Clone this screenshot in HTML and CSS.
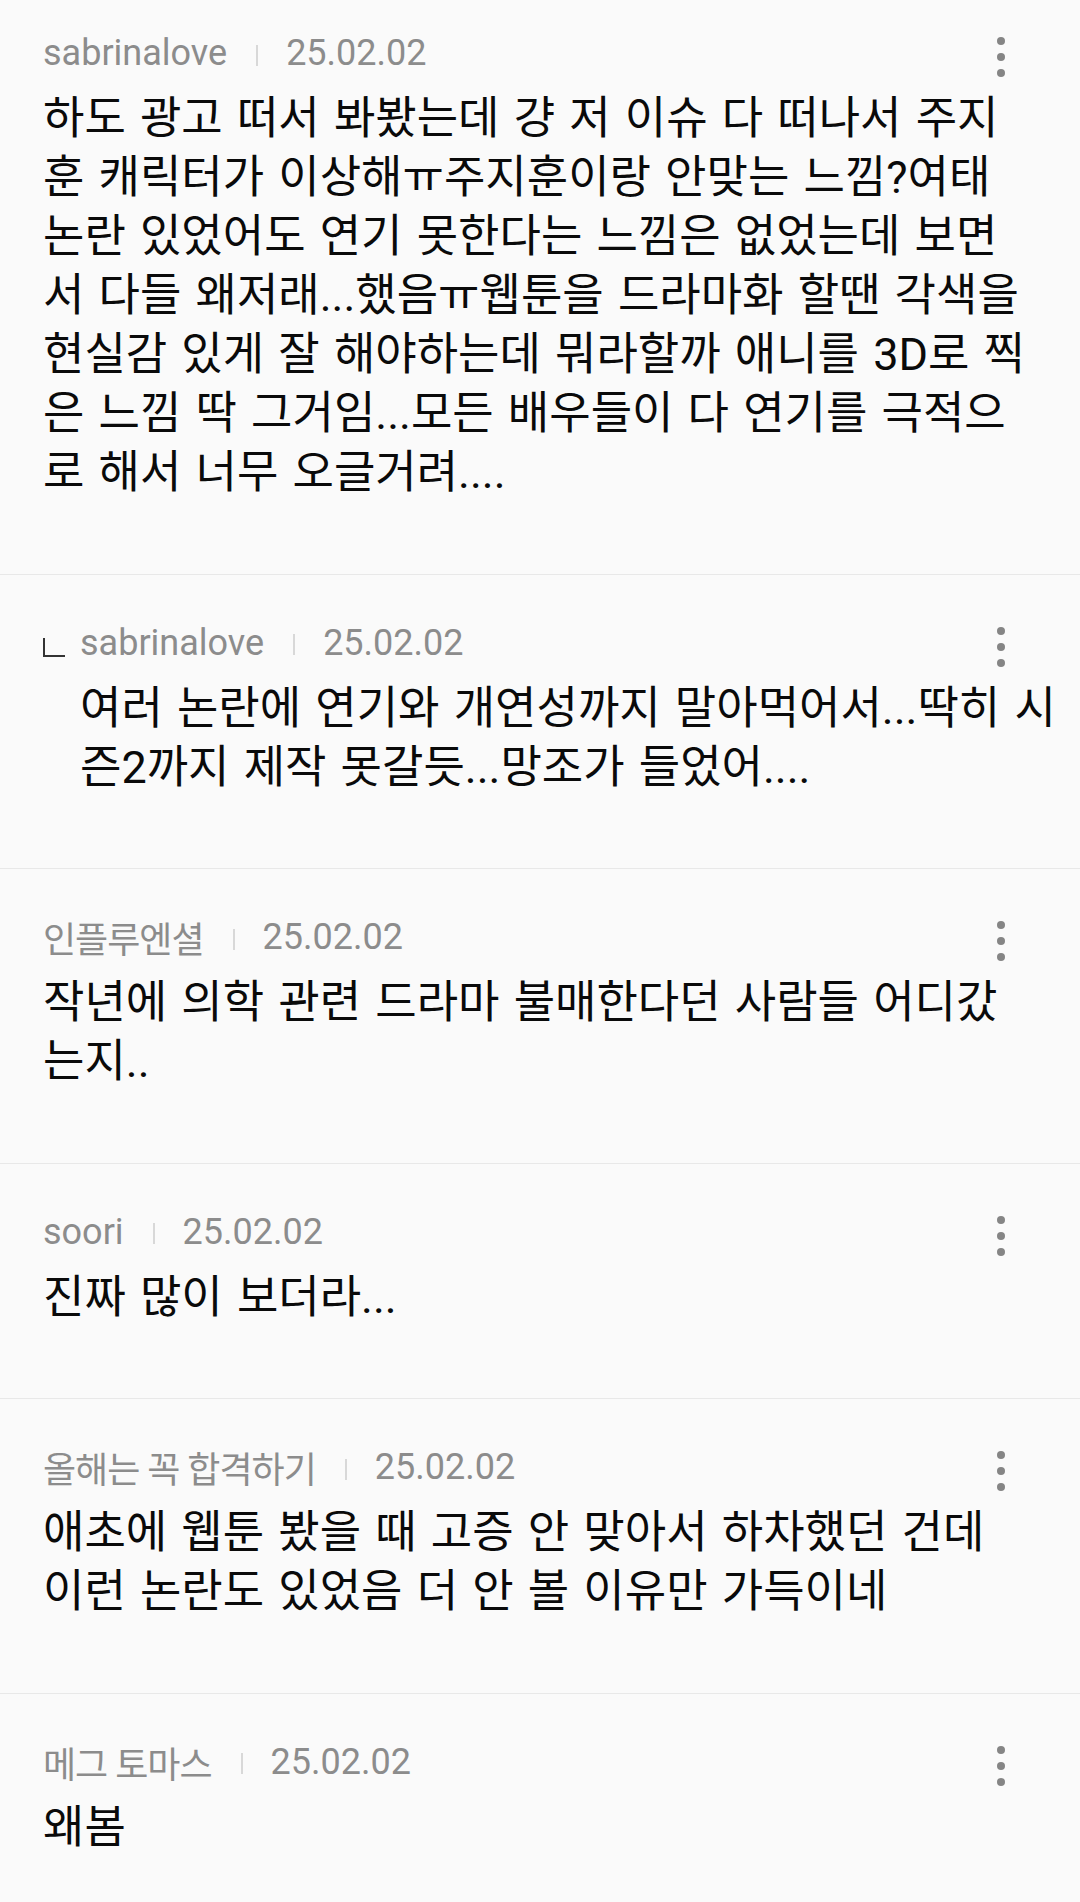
FILE: index.html
```html
<!DOCTYPE html>
<html lang="ko">
<head>
<meta charset="utf-8">
<title>댓글</title>
<link rel="stylesheet" href="styles.css">
</head>
<body>
<div class="list">
  <div class="comment">
    <div class="meta">
      <span class="name">sabrinalove</span><span class="bar"></span><span class="date">25.02.02</span>
      <span class="more"><svg width="8" height="40" viewBox="0 0 8 40"><circle cx="4" cy="4" r="4"/><circle cx="4" cy="20" r="4"/><circle cx="4" cy="36" r="4"/></svg></span>
    </div>
    <p class="body">하도 광고 떠서 봐봤는데 걍 저 이슈 다 떠나서 주지<br>훈 캐릭터가 이상해ㅠ주지훈이랑 안맞는 느낌?여태<br>논란 있었어도 연기 못한다는 느낌은 없었는데 보면<br>서 다들 왜저래...했음ㅠ웹툰을 드라마화 할땐 각색을<br>현실감 있게 잘 해야하는데 뭐라할까 애니를 3D로 찍<br>은 느낌 딱 그거임...모든 배우들이 다 연기를 극적으<br>로 해서 너무 오글거려....</p>
  </div>
  <div class="comment reply">
    <div class="meta">
      <span class="mark"></span><span class="name">sabrinalove</span><span class="bar"></span><span class="date">25.02.02</span>
      <span class="more"><svg width="8" height="40" viewBox="0 0 8 40"><circle cx="4" cy="4" r="4"/><circle cx="4" cy="20" r="4"/><circle cx="4" cy="36" r="4"/></svg></span>
    </div>
    <p class="body">여러 논란에 연기와 개연성까지 말아먹어서...딱히 시<br>즌2까지 제작 못갈듯...망조가 들었어....</p>
  </div>
  <div class="comment">
    <div class="meta">
      <span class="name ko">인플루엔셜</span><span class="bar"></span><span class="date">25.02.02</span>
      <span class="more"><svg width="8" height="40" viewBox="0 0 8 40"><circle cx="4" cy="4" r="4"/><circle cx="4" cy="20" r="4"/><circle cx="4" cy="36" r="4"/></svg></span>
    </div>
    <p class="body">작년에 의학 관련 드라마 불매한다던 사람들 어디갔<br>는지..</p>
  </div>
  <div class="comment">
    <div class="meta">
      <span class="name">soori</span><span class="bar"></span><span class="date">25.02.02</span>
      <span class="more"><svg width="8" height="40" viewBox="0 0 8 40"><circle cx="4" cy="4" r="4"/><circle cx="4" cy="20" r="4"/><circle cx="4" cy="36" r="4"/></svg></span>
    </div>
    <p class="body">진짜 많이 보더라...</p>
  </div>
  <div class="comment">
    <div class="meta">
      <span class="name ko">올해는 꼭 합격하기</span><span class="bar"></span><span class="date">25.02.02</span>
      <span class="more"><svg width="8" height="40" viewBox="0 0 8 40"><circle cx="4" cy="4" r="4"/><circle cx="4" cy="20" r="4"/><circle cx="4" cy="36" r="4"/></svg></span>
    </div>
    <p class="body">애초에 웹툰 봤을 때 고증 안 맞아서 하차했던 건데<br>이런 논란도 있었음 더 안 볼 이유만 가득이네</p>
  </div>
  <div class="comment last">
    <div class="meta">
      <span class="name ko">메그 토마스</span><span class="bar"></span><span class="date">25.02.02</span>
      <span class="more"><svg width="8" height="40" viewBox="0 0 8 40"><circle cx="4" cy="4" r="4"/><circle cx="4" cy="20" r="4"/><circle cx="4" cy="36" r="4"/></svg></span>
    </div>
    <p class="body">왜봄</p>
  </div>
</div>
</body>
</html>
```

FILE: styles.css
```css
html, body {
  margin: 0;
  padding: 0;
  background: #fafafa;
}
body {
  width: 1080px;
  height: 1902px;
  overflow: hidden;
  font-family: Roboto, "Noto Sans CJK KR", sans-serif;
}
.list {
  margin-top: -15px;
}
.comment {
  padding: 43px 12px 71.6px 43px;
  border-bottom: 1px solid #e8e8e8;
}
.comment.last {
  border-bottom: none;
}
.meta {
  display: flex;
  align-items: center;
  height: 50px;
  color: #8c8c8c;
  font-size: 36px;
}
.name {
  white-space: nowrap;
}
.name.ko {
  letter-spacing: -1px;
}
.bar {
  width: 2px;
  height: 21px;
  background: #d8d8d8;
  margin: 4px 28px 0 29px;
}
.date {
  white-space: nowrap;
}
.more {
  margin-left: auto;
  margin-right: 63px;
  margin-top: 8px;
  width: 8px;
  height: 40px;
  fill: #858585;
  display: flex;
}
.mark {
  width: 22px;
  height: 19px;
  border-left: 2px solid #333;
  border-bottom: 2px solid #333;
  box-sizing: border-box;
  margin: 10px 15px 0 0;
}
.body {
  margin: 11px 0 0 0;
  font-size: 45px;
  line-height: 59px;
  word-spacing: 3px;
  font-weight: 400;
  color: #0a0a0a;
  white-space: nowrap;
}
.reply .body {
  margin-left: 37px;
}
```
